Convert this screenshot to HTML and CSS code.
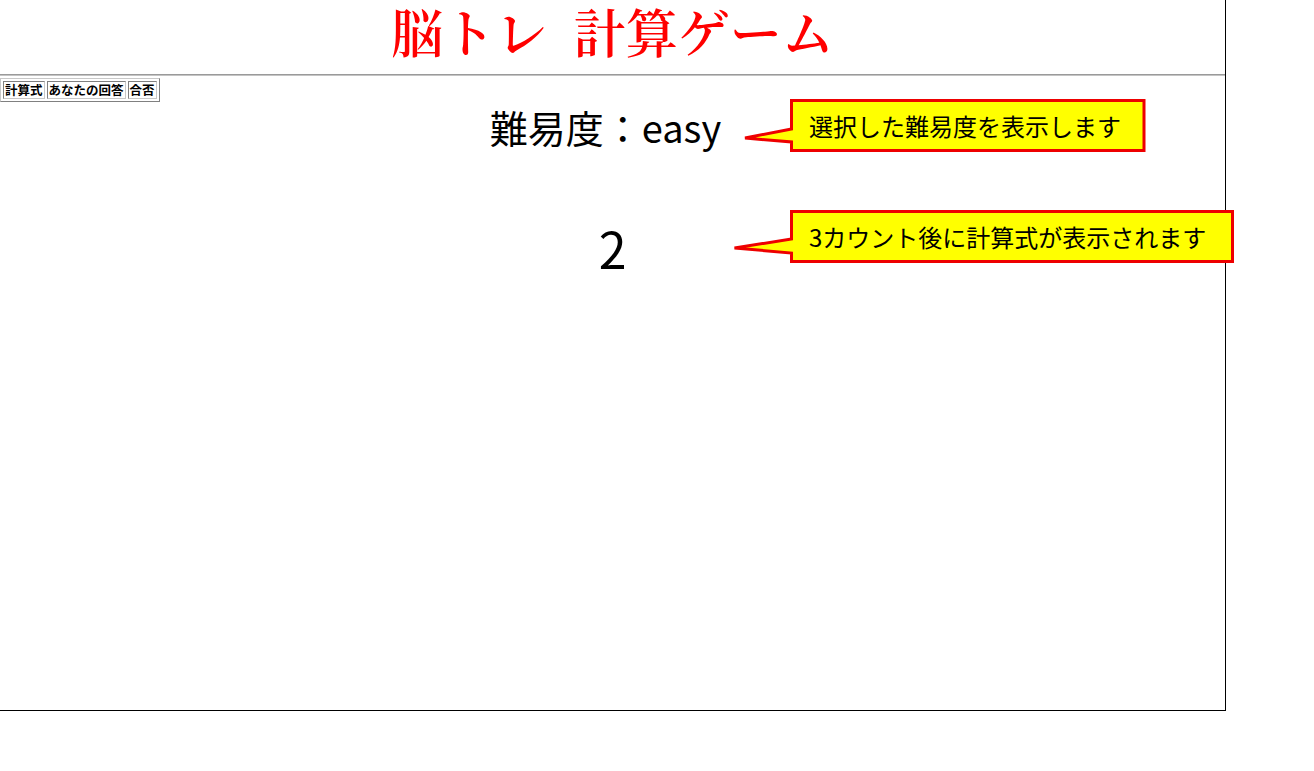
FILE: index.html
```html
<!DOCTYPE html>
<html lang="ja">
<head>
<meta charset="utf-8">
<title>脳トレ 計算ゲーム</title>
<link rel="stylesheet" href="styles.css">
</head>
<body>
<div class="page">
  <h1 class="title">脳トレ&nbsp;&nbsp;計算ゲーム</h1>
  <hr class="rule">
  <table class="score">
    <tr>
      <th>計算式</th>
      <th>あなたの回答</th>
      <th>合否</th>
    </tr>
  </table>
  <main class="stage">
    <p class="level">難易度：easy</p>
    <p class="count">2</p>
  </main>

  <div class="callout callout-level">
    <svg class="callout-shape" width="416" height="58" viewBox="0 0 416 58">
      <polygon points="58.5,3.5 411,3.5 411,53.5 58.5,53.5 58.5,45 12,41 58.5,32" fill="#ffff00" stroke="#ee0000" stroke-width="3" stroke-linejoin="miter"/>
    </svg>
    <span class="callout-text">選択した難易度を表示します</span>
  </div>

  <div class="callout callout-count">
    <svg class="callout-shape" width="504" height="58" viewBox="0 0 504 58">
      <polygon points="58.5,3.5 499.5,3.5 499.5,53.5 58.5,53.5 58.5,45 1.5,40 58.5,31" fill="#ffff00" stroke="#ee0000" stroke-width="3" stroke-linejoin="miter"/>
    </svg>
    <span class="callout-text">3カウント後に計算式が表示されます</span>
  </div>
</div>
</body>
</html>
```

FILE: styles.css
```css
html, body {
  margin: 0;
  padding: 0;
  background: #ffffff;
}

body {
  font-family: "Noto Sans CJK JP", "Noto Sans", sans-serif;
  color: #000;
}

.page {
  position: relative;
  width: 1225px;
  height: 710px;
  border-right: 1px solid #000;
  border-bottom: 1px solid #000;
}

.title {
  margin: 0 0 17px 0;
  padding: 4px 0 0 0;
  text-align: center;
  font-family: "Noto Serif CJK JP", "Liberation Serif", serif;
  font-weight: 600;
  font-size: 52px;
  line-height: 53px;
  color: #ff0000;
}

.rule {
  margin: 0 0 2px 0;
  border: none;
  border-top: 1px solid #9a9a9a;
  border-bottom: 1px solid #c4c4c4;
  height: 0;
}

.score {
  border: 1px solid;
  border-color: #c8c8c8 #808080 #808080 #c8c8c8;
  border-spacing: 2px;
  font-family: "Noto Sans CJK JP", sans-serif;
  font-size: 12.5px;
  line-height: 14px;
}

.score th {
  border: 1px solid;
  border-color: #808080 #c8c8c8 #c8c8c8 #808080;
  padding: 1px 1px;
  font-weight: bold;
}

.stage {
  display: flex;
  flex-direction: column;
  align-items: center;
}

.level {
  margin: 1px 0 0 0;
  padding-right: 14px;
  font-size: 38px;
  line-height: 48px;
}

.count {
  margin: 67px 0 0 0;
  font-size: 50px;
  line-height: 58px;
}

.callout {
  position: absolute;
  display: flex;
  align-items: center;
}

.callout-shape {
  position: absolute;
  left: 0;
  top: 0;
}

.callout-text {
  position: relative;
  font-size: 24px;
  line-height: 30px;
  padding-left: 76px;
}

.callout-level {
  left: 733px;
  top: 97px;
  width: 416px;
  height: 58px;
}

.callout-count {
  left: 733px;
  top: 208px;
  width: 504px;
  height: 58px;
}
```
